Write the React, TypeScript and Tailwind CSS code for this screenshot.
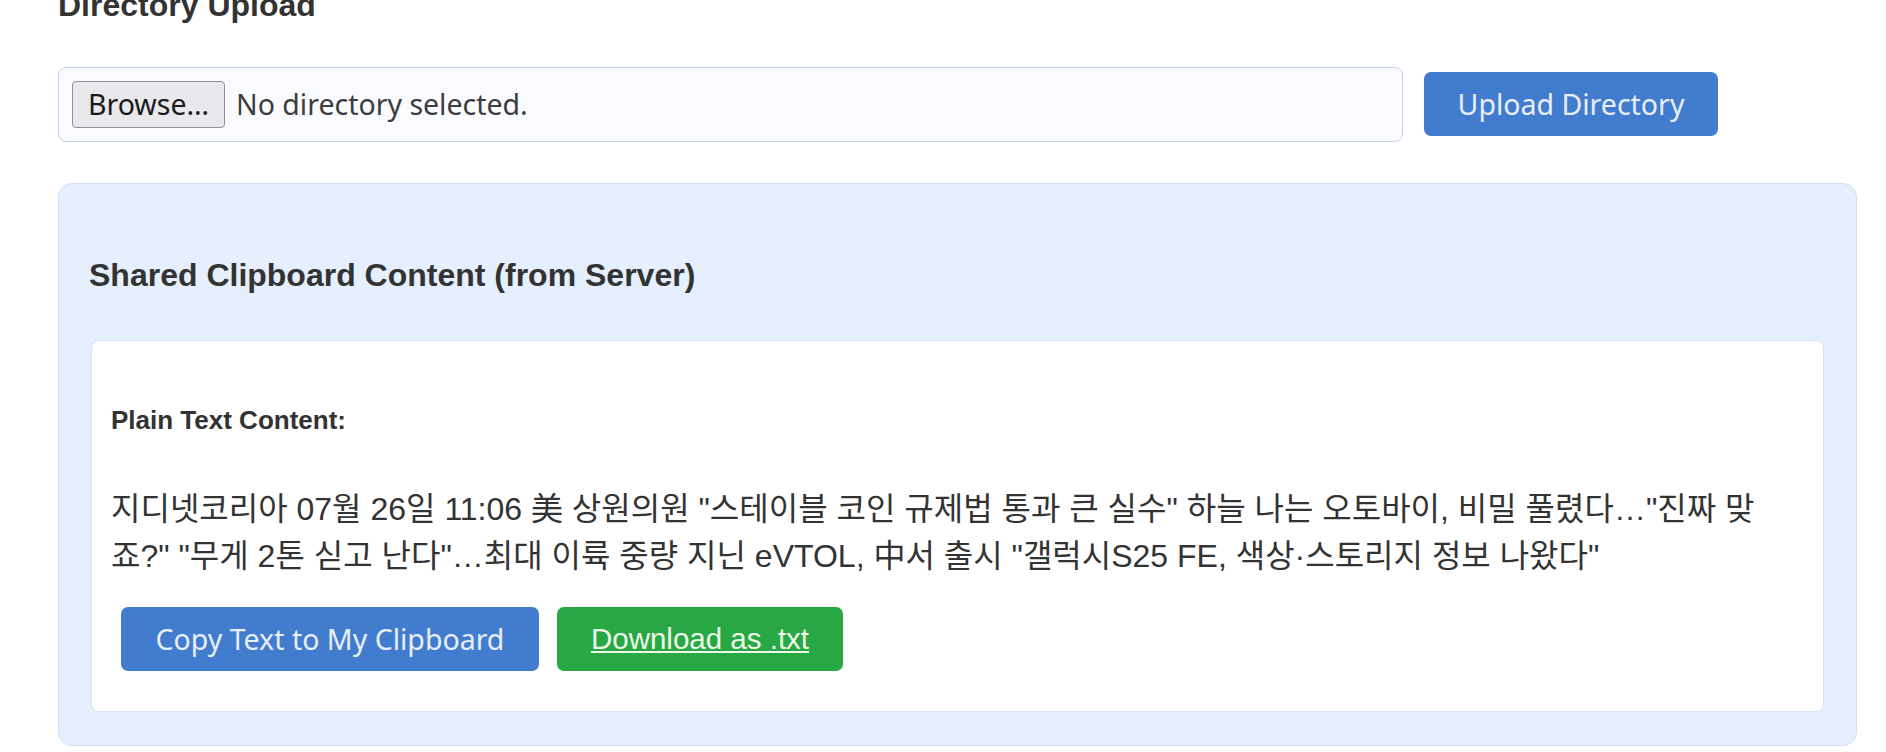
import React from 'react';

const bodyFont = { fontFamily: '"Liberation Sans", "Noto Sans CJK KR", sans-serif' };
const uiFont = { fontFamily: '"Noto Sans", "Noto Sans CJK KR", sans-serif' };

const clipText =
    '지디넷코리아 07월 26일 11:06 美 상원의원 "스테이블 코인 규제법 통과 큰 실수" 하늘 나는 오토바이, 비밀 풀렸다…"진짜 맞죠?" "무게 2톤 싣고 난다"…최대 이륙 중량 지닌 eVTOL, 中서 출시 "갤럭시S25 FE, 색상·스토리지 정보 나왔다"';

export default function App() {
    return (
        <div className="min-h-screen bg-white pl-[58px] pr-[29px] text-[#333]" style={bodyFont}>
            {/* Directory upload */}
            <h2 className="-mt-[13.5px] text-[32px] font-bold leading-[37px] text-[#333]">Directory Upload</h2>

            <div className="mt-[43px] flex items-center gap-[21px]">
                <div className="flex h-[75px] w-[1345px] items-center rounded-[8px] border border-[#c8d5e9] bg-[#f9fbfe] px-[13px]">
                    <div
                        className="flex h-[47px] w-[153px] items-center justify-center rounded-[4px] border border-[#8f8f9d] bg-[#e9e9ed] text-[28.5px] text-[#1b1b1b]"
                        style={uiFont}
                    >
                        Browse…
                    </div>
                    <span className="ml-[11px] text-[28.5px] text-[#3d3d3d]" style={uiFont}>
                        No directory selected.
                    </span>
                </div>
                <button
                    className="flex h-[64px] w-[294px] items-center justify-center rounded-[7px] bg-[#427cce] text-[28.5px] text-[#e8eef8]"
                    style={uiFont}
                >
                    Upload Directory
                </button>
            </div>

            {/* Shared clipboard panel */}
            <div className="mt-[41px] rounded-[14px] border border-[#cfe0f8] bg-[#e5effd] px-[32px] pt-[73px] pb-[33px]">
                <h2 className="-ml-[2px] text-[32px] font-bold leading-[37px] text-[#333]">
                    Shared Clipboard Content (from Server)
                </h2>

                <div className="mt-[46.5px] h-[372px] rounded-[8px] border border-[#d6e3f5] bg-white px-[19px] pt-[64px]">
                    <h4 className="text-[26px] font-bold leading-[30px] text-[#333]">Plain Text Content:</h4>
                    <p className="mt-[51px] text-[32px] leading-[46.6px] text-[#333]">{clipText}</p>

                    <div className="mt-[28px] ml-[10px] flex gap-[18px]">
                        <button
                            className="flex h-[64px] w-[418px] items-center justify-center rounded-[7px] bg-[#427cce] text-[28.5px] text-[#e8eef8]"
                            style={uiFont}
                        >
                            Copy Text to My Clipboard
                        </button>
                        <a
                            href="#"
                            className="flex h-[64px] w-[286px] items-center justify-center rounded-[7px] bg-[#28a745] text-[29.5px] text-[#eef8e8] underline"
                        >
                            Download as .txt
                        </a>
                    </div>
                </div>
            </div>
        </div>
    );
}
